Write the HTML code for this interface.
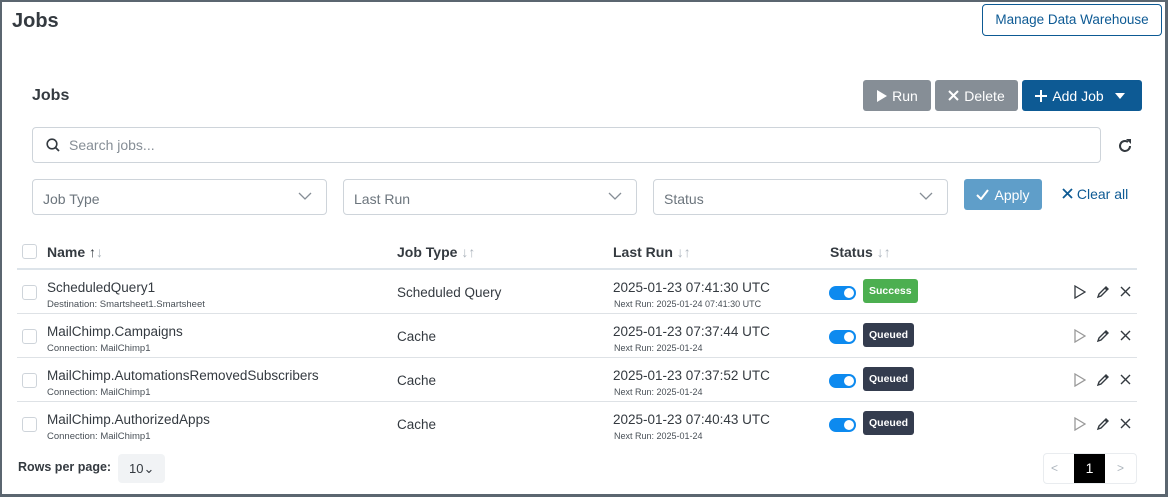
<!DOCTYPE html>
<html><head><style>
*{box-sizing:border-box;margin:0;padding:0}
body{width:1168px;height:497px;font-family:"Liberation Sans",Arial,sans-serif;background:#fff;position:relative;overflow:hidden;color:#212529}
.frame{position:absolute;left:0;top:0;width:1168px;height:497px;border:2px solid #5b6670;border-right-width:3px;border-bottom-width:3px}
.a{position:absolute}
.btn{position:absolute;height:31px;border-radius:3px;color:#fff;font-size:14px;display:flex;align-items:center;justify-content:center;gap:5px}
.sel{position:absolute;top:179px;height:36px;border:1px solid #ced4da;border-radius:4px;font-size:14px;color:#6c757d;padding:11px 10px}
.sel svg{position:absolute;right:14px;top:12px}
.cb{position:absolute;left:22px;width:15px;height:15px;border:1px solid #ced4da;border-radius:3px;background:#fff}
.th{position:absolute;top:244px;font-size:14px;font-weight:bold;color:#343a40}
.th span{color:#adb5bd;font-weight:normal}
.row{position:absolute;left:17px;width:1120px;height:44px;border-bottom:1px solid #dee2e6}
.nm{position:absolute;left:30px;top:10px;font-size:13.5px;color:#343a40}
.sub{position:absolute;left:30px;top:29px;font-size:9.5px;color:#495057}
.jt{position:absolute;left:380px;top:15px;font-size:13.5px;color:#343a40}
.lr{position:absolute;left:596px;top:10px;font-size:13.5px;color:#343a40}
.nr{position:absolute;left:597px;top:29px;font-size:9px;color:#495057}
.tg{position:absolute;left:812px;top:16px;width:27px;height:14px;border-radius:7px;background:#0d8aef}
.tg:after{content:"";position:absolute;right:2px;top:2px;width:10px;height:10px;border-radius:5px;background:#fff}
.bd{position:absolute;left:846px;top:9px;height:24px;border-radius:3px;color:#fff;font-size:10.5px;font-weight:bold;padding:6px 6px}
.ic{position:absolute;top:15px}
</style></head><body>
<div class="a" style="left:12px;top:10px;font-size:20px;font-weight:bold;color:#343a40">Jobs</div>
<div class="a" style="left:982px;top:4px;width:180px;height:32px;border:1px solid #0d5a94;border-radius:4px;color:#0d5a94;font-size:13.5px;text-align:center;line-height:30px">Manage Data Warehouse</div>
<div class="a" style="left:32px;top:87px;font-size:16px;font-weight:bold;color:#343a40">Jobs</div>
<div class="btn" style="left:863px;top:80px;width:68px;background:#868e96"><svg width="11" height="12"><path d="M1 0L11 6L1 12Z" fill="#fff"/></svg>Run</div>
<div class="btn" style="left:935px;top:80px;width:83px;background:#868e96"><svg width="11" height="11"><path d="M1 1L10 10M10 1L1 10" stroke="#fff" stroke-width="2"/></svg>Delete</div>
<div class="btn" style="left:1022px;top:80px;width:120px;background:#0d5a94"><svg width="12" height="12"><path d="M6 0V12M0 6H12" stroke="#fff" stroke-width="2"/></svg>Add Job<svg width="20" height="8"><path d="M6 1H16L11 7Z" fill="#fff"/></svg></div>
<div class="a" style="left:32px;top:127px;width:1069px;height:36px;border:1px solid #ced4da;border-radius:4px"></div>
<svg class="a" style="left:46px;top:138px" width="14" height="14"><circle cx="6" cy="6" r="4.8" fill="none" stroke="#343a40" stroke-width="1.6"/><path d="M9.5 9.5L13 13" stroke="#343a40" stroke-width="1.8"/></svg>
<div class="a" style="left:69px;top:137px;font-size:14px;color:#868e96">Search jobs...</div>
<svg class="a" style="left:1117px;top:138px" width="16" height="16"><path d="M13 8A5 5 0 1 1 11 4" fill="none" stroke="#343a40" stroke-width="2"/><path d="M9 1H14V6Z" fill="#343a40"/></svg>
<div class="sel" style="left:32px;width:295px">Job Type<svg width="14" height="8"><path d="M1 1L7 7L13 1" fill="none" stroke="#868e96" stroke-width="1.3"/></svg></div>
<div class="sel" style="left:343px;width:294px">Last Run<svg width="14" height="8"><path d="M1 1L7 7L13 1" fill="none" stroke="#868e96" stroke-width="1.3"/></svg></div>
<div class="sel" style="left:653px;width:295px">Status<svg width="14" height="8"><path d="M1 1L7 7L13 1" fill="none" stroke="#868e96" stroke-width="1.3"/></svg></div>
<div class="btn" style="left:964px;top:179px;width:78px;background:#5f9ec9;height:31px"><svg width="13" height="11"><path d="M1 6L5 10L12 1" fill="none" stroke="#fff" stroke-width="2"/></svg>Apply</div>
<div class="a" style="left:1062px;top:186px;font-size:14px;color:#0d5a94"><svg width="11" height="11"><path d="M1 1L10 10M10 1L1 10" stroke="#0d5a94" stroke-width="1.8"/></svg> Clear all</div>
<div class="cb" style="top:244px"></div>
<div class="th" style="left:47px">Name <b style="color:#343a40">↑</b><span>↓</span></div>
<div class="th" style="left:397px">Job Type <span>↓↑</span></div>
<div class="th" style="left:613px">Last Run <span>↓↑</span></div>
<div class="th" style="left:830px">Status <span>↓↑</span></div>
<div class="a" style="left:17px;top:268px;width:1120px;height:2px;background:#dde4ea"></div>

<div class="row" style="top:270px"><div class="cb" style="left:5px;top:15px"></div><div class="nm">ScheduledQuery1</div><div class="sub">Destination: Smartsheet1.Smartsheet</div><div class="jt">Scheduled Query</div><div class="lr">2025-01-23 07:41:30 UTC</div><div class="nr">Next Run: 2025-01-24 07:41:30 UTC</div><div class="tg"></div><div class="bd" style="background:#4caf50">Success</div>
<svg class="ic" style="left:1057px" width="12" height="14"><path d="M1 1L11 7L1 13Z" fill="none" stroke="#343a40" stroke-width="1.3"/></svg><svg class="ic" style="left:1079px" width="14" height="14"><path d="M2 12L3 9L10 2L12 4L5 11Z M9 3L11 5" fill="none" stroke="#343a40" stroke-width="1.4"/></svg><svg class="ic" style="left:1103px;top:16px" width="11" height="11"><path d="M1 1L10 10M10 1L1 10" stroke="#343a40" stroke-width="1.4"/></svg></div>

<div class="row" style="top:314px"><div class="cb" style="left:5px;top:15px"></div><div class="nm">MailChimp.Campaigns</div><div class="sub">Connection: MailChimp1</div><div class="jt">Cache</div><div class="lr">2025-01-23 07:37:44 UTC</div><div class="nr">Next Run: 2025-01-24</div><div class="tg"></div><div class="bd" style="background:#343c4e">Queued</div>
<svg class="ic" style="left:1057px" width="12" height="14"><path d="M1 1L11 7L1 13Z" fill="none" stroke="#999" stroke-width="1.3"/></svg><svg class="ic" style="left:1079px" width="14" height="14"><path d="M2 12L3 9L10 2L12 4L5 11Z M9 3L11 5" fill="none" stroke="#343a40" stroke-width="1.4"/></svg><svg class="ic" style="left:1103px;top:16px" width="11" height="11"><path d="M1 1L10 10M10 1L1 10" stroke="#343a40" stroke-width="1.4"/></svg></div>

<div class="row" style="top:358px"><div class="cb" style="left:5px;top:15px"></div><div class="nm">MailChimp.AutomationsRemovedSubscribers</div><div class="sub">Connection: MailChimp1</div><div class="jt">Cache</div><div class="lr">2025-01-23 07:37:52 UTC</div><div class="nr">Next Run: 2025-01-24</div><div class="tg"></div><div class="bd" style="background:#343c4e">Queued</div>
<svg class="ic" style="left:1057px" width="12" height="14"><path d="M1 1L11 7L1 13Z" fill="none" stroke="#999" stroke-width="1.3"/></svg><svg class="ic" style="left:1079px" width="14" height="14"><path d="M2 12L3 9L10 2L12 4L5 11Z M9 3L11 5" fill="none" stroke="#343a40" stroke-width="1.4"/></svg><svg class="ic" style="left:1103px;top:16px" width="11" height="11"><path d="M1 1L10 10M10 1L1 10" stroke="#343a40" stroke-width="1.4"/></svg></div>

<div class="row" style="top:402px;border-bottom:none"><div class="cb" style="left:5px;top:15px"></div><div class="nm">MailChimp.AuthorizedApps</div><div class="sub">Connection: MailChimp1</div><div class="jt">Cache</div><div class="lr">2025-01-23 07:40:43 UTC</div><div class="nr">Next Run: 2025-01-24</div><div class="tg"></div><div class="bd" style="background:#343c4e">Queued</div>
<svg class="ic" style="left:1057px" width="12" height="14"><path d="M1 1L11 7L1 13Z" fill="none" stroke="#999" stroke-width="1.3"/></svg><svg class="ic" style="left:1079px" width="14" height="14"><path d="M2 12L3 9L10 2L12 4L5 11Z M9 3L11 5" fill="none" stroke="#343a40" stroke-width="1.4"/></svg><svg class="ic" style="left:1103px;top:16px" width="11" height="11"><path d="M1 1L10 10M10 1L1 10" stroke="#343a40" stroke-width="1.4"/></svg></div>

<div class="a" style="left:18px;top:460px;font-size:12.5px;font-weight:bold;color:#343a40">Rows per page:</div>
<div class="a" style="left:118px;top:454px;width:47px;height:29px;background:#f1f3f5;border-radius:4px;font-size:13px;color:#343a40;padding:7px 0 0 11px">10⌄</div>
<div class="a" style="left:1043px;top:453px;width:94px;height:31px;border:1px solid #e9ecef;border-radius:4px"></div>
<div class="a" style="left:1051px;top:461px;font-size:12px;color:#adb5bd">&lt;</div>
<div class="a" style="left:1074px;top:454px;width:31px;height:29px;background:#000;color:#fff;font-size:14px;text-align:center;line-height:29px">1</div>
<div class="a" style="left:1117px;top:461px;font-size:12px;color:#adb5bd">&gt;</div>
<div class="frame"></div>
</body></html>
